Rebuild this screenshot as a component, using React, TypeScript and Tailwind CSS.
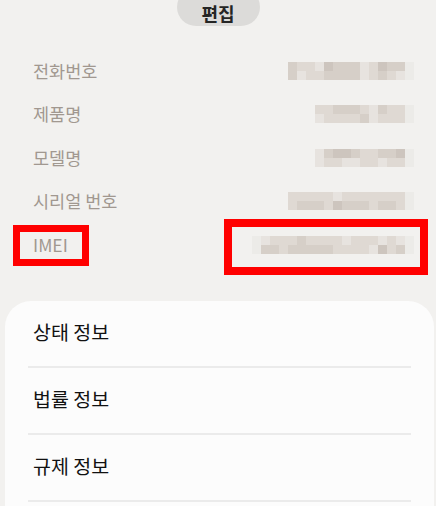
import React from 'react';

const SHADES: Record<string, string> = {
    a: '#cdc5be',
    b: '#d6cfc8',
    c: '#dfd9d3',
    d: '#e7e3df',
    e: '#ecebe8',
    '.': 'transparent',
};

const Pixels = ({ rows }: { rows: string[] }) => (
    <div className="flex flex-col">
        {rows.map((row, i) => (
            <div key={i} className="flex">
                {row.split('').map((ch, j) => (
                    <div key={j} className="w-[9px] h-[9px]" style={{ background: SHADES[ch] }} />
                ))}
            </div>
        ))}
    </div>
);

const info = [
    { label: '전화번호', rows: ['bccdabbbdcabbe', 'bdccbbbbdcbcde'] },
    { label: '제품명', rows: ['ccbbbcdbcce', 'dccccbdccce'] },
    { label: '모델명', rows: ['dbaabccbbae', 'dccddccdcce'] },
    { label: '시리얼 번호', rows: ['cccccdccccccce', 'cbbbcabbbcbbce'] },
    { label: 'IMEI', rows: ['edcccbccccdcccdcde', 'ebbcbbbbbccccdacbe'] },
];

const menu = ['상태 정보', '법률 정보', '규제 정보'];

const App = () => {
    return (
        <main
            className="relative w-[436px] h-[506px] overflow-hidden bg-[#f2f1ef]"
            style={{ fontFamily: '"Noto Sans CJK KR", "Noto Sans", sans-serif' }}
        >
            <div className="flex justify-center">
                <button className="mt-[-12px] w-[83px] h-[38px] pt-[12px] rounded-full bg-[#dcdbd9] text-[18px] leading-[20px] font-bold text-[#252525]">
                    편집
                </button>
            </div>

            <section className="mt-[23px] flex flex-col">
                {info.map((item) => (
                    <div key={item.label} className="h-[43.5px] pl-[33px] pr-[22px] flex items-center justify-between">
                        <span className="text-[17.5px] text-[#a19890]">{item.label}</span>
                        <Pixels rows={item.rows} />
                    </div>
                ))}
            </section>

            <section className="mt-[34px] ml-[5px] mr-[2px] h-[220px] rounded-t-[26px] bg-[#fcfcfc]">
                {menu.map((m) => (
                    <div key={m} className="mx-[23px] h-[67px] pb-[2px] flex items-center border-b-2 border-[#ebebeb]">
                        <span className="pl-[5px] text-[19.5px] text-[#111111]">{m}</span>
                    </div>
                ))}
            </section>

            <div className="absolute left-[13px] top-[225px] w-[76px] h-[41px] border-[7px] border-[#ff0000]" />
            <div className="absolute left-[224px] top-[219px] w-[204px] h-[56px] border-[8px] border-[#ff0000]" />
        </main>
    );
};

export default App;
